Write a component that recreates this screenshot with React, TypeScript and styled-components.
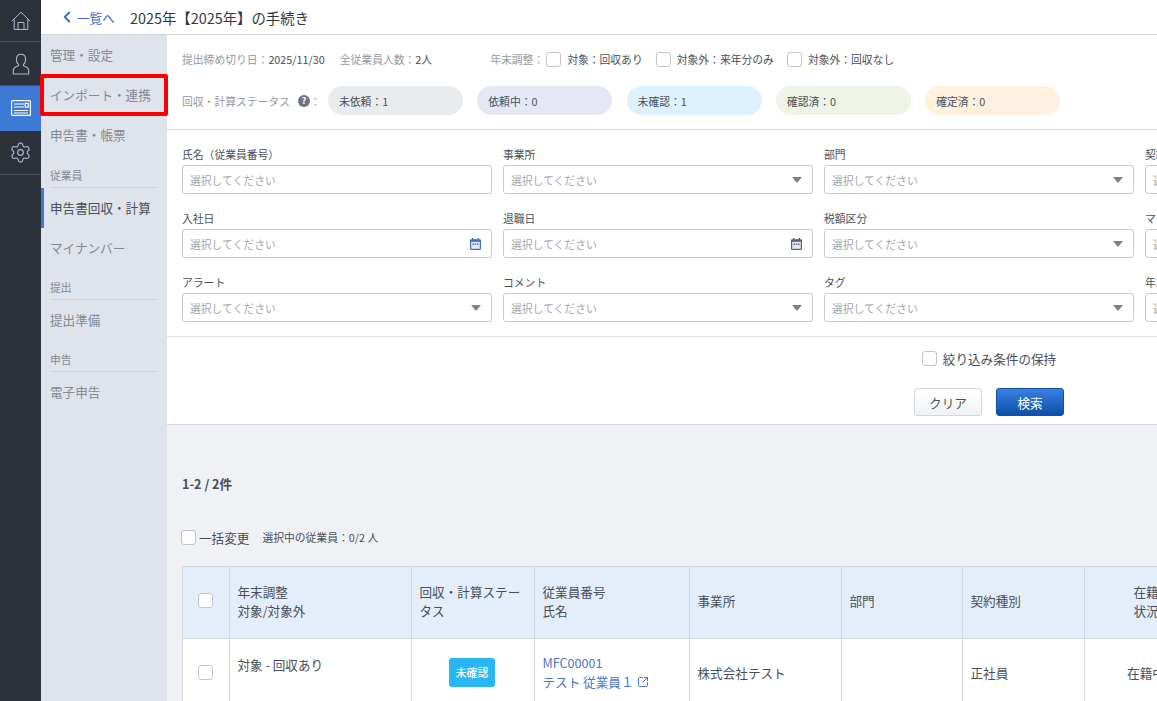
import React from 'react';
import styled, { createGlobalStyle } from 'styled-components';
import { Settings, SquareArrowOutUpRight, ChevronLeft } from 'lucide-react';

const GlobalStyle = createGlobalStyle`
  html, body {
    margin: 0;
    height: 100%;
    overflow: hidden;
    background: #fff;
    font-family: "Noto Sans CJK JP", "Noto Sans", sans-serif;
    color: #4a4f57;
  }
  * { box-sizing: border-box; }
`;

const Page = styled.div`
  display: flex;
  width: 1157px;
  height: 701px;
  overflow: hidden;
`;

const Rail = styled.nav`
  flex: 0 0 41px;
  background: #2d313a;
  display: flex;
  flex-direction: column;
`;

const RailItem = styled.div<{ $active?: boolean; $height: number }>`
  height: ${(p) => p.$height}px;
  display: flex;
  align-items: center;
  justify-content: center;
  color: ${(p) => (p.$active ? '#fff' : '#b0b8d0')};
  background: ${(p) => (p.$active ? '#3d7ad6' : 'transparent')};
  border-bottom: 1px solid ${(p) => (p.$active ? '#3d7ad6' : '#4a4f5c')};
`;

const Body = styled.div`
  flex: 1;
  min-width: 0;
  display: flex;
  flex-direction: column;
`;

const Header = styled.header`
  flex: 0 0 35px;
  display: flex;
  align-items: center;
  padding-left: 17px;
  background: #fff;
  border-bottom: 1px solid #d5d8e0;
`;

const BackLink = styled.a`
  display: flex;
  align-items: center;
  gap: 1px;
  width: 72px;
  font-size: 12.6px;
  color: #3b6fc4;
`;

const Title = styled.h1`
  margin: 0;
  font-size: 14.4px;
  font-weight: 400;
  color: #33373e;
`;

const Columns = styled.div`
  flex: 1;
  min-height: 0;
  display: flex;
`;

const SubNav = styled.aside`
  flex: 0 0 126px;
  background: #dfe3ec;
  position: relative;
  z-index: 1;
`;

const NavItem = styled.div<{ $active?: boolean; $height?: number; $marked?: boolean }>`
  position: relative;
  height: ${(p) => p.$height ?? 40}px;
  display: flex;
  align-items: center;
  padding-left: ${(p) => (p.$active ? 6 : 9)}px;
  padding-bottom: 2px;
  font-size: 12.6px;
  color: ${(p) => (p.$active ? '#4a4f57' : '#858994')};
  border-left: ${(p) => (p.$active ? '3px solid #3d7ad6' : 'none')};

  ${(p) =>
    p.$marked &&
    `&::after {
      content: '';
      position: absolute;
      inset: -1px -1px -1px -1px;
      border: 4px solid #fa0000;
      border-radius: 2px;
    }`}
`;

const NavHeading = styled.div`
  height: 32px;
  margin: 0 9px;
  padding-top: 11px;
  font-size: 10.8px;
  line-height: 16px;
  color: #858994;
  border-bottom: 1px solid #d0d3d9;
`;

const Main = styled.main`
  flex: 1;
  min-width: 0;
  overflow: hidden;
  background: #eff1f5;
`;

const Inner = styled.div`
  width: 1644px;
`;

const Summary = styled.section`
  height: 95px;
  padding: 14px 15px 0;
  background: #fff;
  border-bottom: 1px solid #d5d8de;
`;

const SummaryRow = styled.div`
  display: flex;
  align-items: center;
  height: 20px;
  font-size: 10.8px;
`;

const Fact = styled.span`
  margin-right: 15px;
  color: #4a4f57;
`;

const Muted = styled.span`
  color: #9599a3;
`;

const CheckGroup = styled.div`
  display: flex;
  align-items: center;
  gap: 13px;
  margin-left: 43px;
`;

const GroupTitle = styled(Muted)`
  margin-right: -11px;
`;

const Box = styled.span<{ $size?: number }>`
  flex: none;
  display: inline-block;
  width: ${(p) => p.$size ?? 15}px;
  height: ${(p) => p.$size ?? 15}px;
  background: #fff;
  border: 1px solid #c2c5cd;
  border-radius: 3px;
`;

const CellBox = styled(Box)`
  display: block;
  margin: 0 auto;
`;

const CheckLabel = styled.label<{ $gap?: number }>`
  display: inline-flex;
  align-items: center;
  gap: ${(p) => p.$gap ?? 6}px;
  color: #4a4f57;
`;

const StatusRow = styled.div`
  display: flex;
  align-items: center;
  margin-top: 17px;
  font-size: 10.8px;
`;

const StatusLabel = styled.div`
  display: flex;
  align-items: center;
  width: 146px;
  gap: 7px;
  color: #9599a3;
`;

const HelpColon = styled.span`
  margin-left: -8px;
`;

const Pills = styled.div`
  display: flex;
  gap: 14.3px;
`;

const Pill = styled.div<{ $bg: string }>`
  width: 135px;
  height: 29px;
  display: flex;
  align-items: center;
  padding-left: 11px;
  border-radius: 15px;
  background: ${(p) => p.$bg};
  color: #4a4f57;
`;

const Filters = styled.section`
  display: grid;
  grid-template-columns: repeat(5, 310px);
  column-gap: 11px;
  row-gap: 16px;
  padding: 16px 15px 14px;
  background: #fff;
  border-bottom: 1px solid #e2e4e9;
`;

const Field = styled.div`
  display: flex;
  flex-direction: column;
  gap: 3px;
`;

const FieldLabel = styled.div`
  height: 16px;
  font-size: 10.8px;
  line-height: 16px;
  color: #4a4f57;
`;

const Input = styled.div`
  height: 29px;
  display: flex;
  align-items: center;
  justify-content: space-between;
  padding: 0 10px 0 7px;
  font-size: 10.8px;
  color: #a3a6ac;
  background: #fff;
  border: 1px solid #c8cad0;
  border-radius: 3px;
`;

const Caret = styled.span`
  width: 0;
  height: 0;
  border-left: 5px solid transparent;
  border-right: 5px solid transparent;
  border-top: 6px solid #7b7f8b;
`;

const Actions = styled.section`
  height: 88px;
  display: flex;
  flex-direction: column;
  align-items: center;
  padding-top: 12px;
  gap: 21px;
  background: #fff;
  border-bottom: 1px solid #d5d8de;
`;

const KeepLabel = styled(CheckLabel)`
  font-size: 12.6px;
  height: 18px;
`;

const ButtonRow = styled.div`
  display: flex;
  gap: 14px;
`;

const Button = styled.button<{ $primary?: boolean }>`
  width: 68px;
  height: 28px;
  padding: 0;
  font: inherit;
  font-size: 12.6px;
  border-radius: 3px;
  color: ${(p) => (p.$primary ? '#fff' : '#4a4f57')};
  border: 1px solid ${(p) => (p.$primary ? '#0b52ac' : '#d3d6dc')};
  background: ${(p) =>
    p.$primary
      ? 'linear-gradient(#3b7fe2, #0a50a8)'
      : 'linear-gradient(#fff, #f1f2f5)'};
`;

const ListArea = styled.section`
  padding: 49px 15px 0;
`;

const Count = styled.div`
  height: 20px;
  font-size: 12.6px;
  line-height: 20px;
  font-weight: 700;
  color: #4a4f57;
`;

const BulkRow = styled.div`
  display: flex;
  align-items: center;
  height: 18px;
  margin: 34px 0 20px -1px;
`;

const BulkLabel = styled(CheckLabel)`
  font-size: 12.6px;
  gap: 3px;
  margin-right: 13px;
`;

const Selected = styled.span`
  font-size: 10.8px;
  color: #4a4f57;
`;

const Table = styled.table`
  table-layout: fixed;
  width: 1027px;
  border-collapse: collapse;
  background: #fff;
  font-size: 12.6px;
  line-height: 19px;
  color: #4a4f57;
`;

const HeadCell = styled.th<{ $width: number; $center?: boolean }>`
  width: ${(p) => p.$width}px;
  height: 72px;
  padding: ${(p) => (p.$center ? '0 9.5px 4px 7.5px' : '0 7.5px 4px')};
  font-weight: 400;
  text-align: ${(p) => (p.$center ? 'center' : 'left')};
  background: #e4eefb;
  border: 1px solid #d3d7de;
`;

const Cell = styled.td<{ $center?: boolean; $top?: boolean }>`
  height: 69px;
  padding: ${(p) => {
    if (p.$top) return '16px 7.5px 0';
    return p.$center ? '0 9.5px 2px 7.5px' : '0 7.5px 2px';
  }};
  vertical-align: ${(p) => (p.$top ? 'top' : 'middle')};
  text-align: ${(p) => (p.$center ? 'center' : 'left')};
  border: 1px solid #d3d7de;
`;

const StatusBadge = styled.span`
  display: inline-flex;
  align-items: center;
  justify-content: center;
  width: 46px;
  height: 29px;
  border-radius: 3px;
  font-size: 10.8px;
  font-weight: 500;
  color: #fff;
  background: #29b6f6;
`;

const EmployeeLink = styled.a`
  display: flex;
  align-items: center;
  gap: 4px;
  color: #4a76c9;
  font-size: 12.6px;
`;

const HomeIcon = () => (
  <svg width="20" height="20" viewBox="0 0 20 20" fill="none" stroke="currentColor" strokeWidth="1" strokeLinejoin="round">
    <path d="M0.8 10.2 10 1.2l9.2 9M3.2 8.2v10.3h13.6V8.2" />
    <path d="M7 18.5v-7h6v7" />
  </svg>
);

const UserIcon = () => (
  <svg width="18" height="22" viewBox="0 0 18 22" fill="none" stroke="currentColor" strokeWidth="1.1" strokeLinejoin="round">
    <path d="M9 1.2c-3 0-4.600 2.300-4.600 5.200 0 2.200.9 4.200 2.200 5.200v1.200c-2.800.9-5.300 2.500-5.300 4.600v3.600h15.400v-3.600c0-2.100-2.500-3.700-5.300-4.600v-1.200c1.300-1 2.200-3 2.200-5.200C13.600 3.500 12 1.200 9 1.200z" />
  </svg>
);

const FormIcon = () => (
  <svg width="20" height="16" viewBox="0 0 20 16" fill="none" stroke="currentColor" strokeWidth="1.2">
    <rect x="0.6" y="0.6" width="18.8" height="14.8" rx="1" />
    <path d="M3 4h10M3 7h10M3 10.500h14M3 13h14" />
    <rect x="14.200" y="3.400" width="3" height="3.800" />
  </svg>
);

const CalendarIcon = ({ color }: { color: string }) => (
  <svg width="11" height="12" viewBox="0 0 11 12">
    <path fill={color} d="M2 0h1.400v1.200h4.200V0H9v1.200h.8c.7 0 1.200.5 1.200 1.200v8.400c0 .7-.5 1.200-1.200 1.200H1.200C.5 12 0 11.500 0 10.800V2.400c0-.7.5-1.200 1.200-1.200H2z" />
    <rect x="1.200" y="3.800" width="8.600" height="7" fill="#e4e8f4" />
    <path fill={color} d="M2.500 5.600h1.400V7H2.500zM4.800 5.600h1.400V7H4.800zM7.100 5.600h1.400V7H7.100z" />
  </svg>
);

const HelpIcon = () => (
  <svg width="14" height="14" viewBox="0 0 14 14">
    <circle cx="7" cy="7" r="6" fill="#6f7382" />
    <text x="7" y="10.300" fontSize="9.500" fontWeight="700" textAnchor="middle" fill="#fff">?</text>
  </svg>
);

const placeholder = '選択してください';

type FieldDef = { label: string; icon?: 'caret' | 'calBlue' | 'calGrey' | 'none' };

const fields: FieldDef[] = [
  { label: '氏名（従業員番号）', icon: 'none' },
  { label: '事業所' },
  { label: '部門' },
  { label: '契約種別' },
  { label: '在籍状況' },
  { label: '入社日', icon: 'calBlue' },
  { label: '退職日', icon: 'calGrey' },
  { label: '税額区分' },
  { label: 'マイナンバー' },
  { label: '回収状況' },
  { label: 'アラート' },
  { label: 'コメント' },
  { label: 'タグ' },
  { label: '年末調整' },
];

const pills = [
  { text: '未依頼：1', bg: '#e9ecef' },
  { text: '依頼中：0', bg: '#e6e7f5' },
  { text: '未確認：1', bg: '#def2fe' },
  { text: '確認済：0', bg: '#eef4e6' },
  { text: '確定済：0', bg: '#fff1de' },
];

const FieldIcon = ({ icon }: { icon?: FieldDef['icon'] }) => {
  if (icon === 'none') return null;
  if (icon === 'calBlue') return <CalendarIcon color="#3d6fc8" />;
  if (icon === 'calGrey') return <CalendarIcon color="#5c606c" />;
  return <Caret />;
};

export default function App() {
  return (
    <Page>
      <GlobalStyle />
      <Rail>
        <RailItem $height={42}><HomeIcon /></RailItem>
        <RailItem $height={44}><UserIcon /></RailItem>
        <RailItem $height={45} $active><FormIcon /></RailItem>
        <RailItem $height={44}><Settings size={23} strokeWidth={1.2} /></RailItem>
      </Rail>
      <Body>
        <Header>
          <BackLink>
            <ChevronLeft size={18} strokeWidth={2.6} />
            一覧へ
          </BackLink>
          <Title>2025年【2025年】の手続き</Title>
        </Header>
        <Columns>
          <SubNav>
            <NavItem>管理・設定</NavItem>
            <NavItem $marked>インポート・連携</NavItem>
            <NavItem $height={41}>申告書・帳票</NavItem>
            <NavHeading>従業員</NavHeading>
            <NavItem $active>申告書回収・計算</NavItem>
            <NavItem>マイナンバー</NavItem>
            <NavHeading>提出</NavHeading>
            <NavItem>提出準備</NavItem>
            <NavHeading>申告</NavHeading>
            <NavItem>電子申告</NavItem>
          </SubNav>
          <Main>
            <Inner>
              <Summary>
                <SummaryRow>
                  <Fact><Muted>提出締め切り日：</Muted>2025/11/30</Fact>
                  <Fact><Muted>全従業員人数：</Muted>2人</Fact>
                  <CheckGroup>
                    <GroupTitle>年末調整：</GroupTitle>
                    <CheckLabel><Box />対象：回収あり</CheckLabel>
                    <CheckLabel><Box />対象外：来年分のみ</CheckLabel>
                    <CheckLabel><Box />対象外：回収なし</CheckLabel>
                  </CheckGroup>
                </SummaryRow>
                <StatusRow>
                  <StatusLabel>
                    回収・計算ステータス
                    <HelpIcon />
                    <HelpColon>：</HelpColon>
                  </StatusLabel>
                  <Pills>
                    {pills.map((pill) => (
                      <Pill key={pill.text} $bg={pill.bg}>{pill.text}</Pill>
                    ))}
                  </Pills>
                </StatusRow>
              </Summary>
              <Filters>
                {fields.map((field) => (
                  <Field key={field.label}>
                    <FieldLabel>{field.label}</FieldLabel>
                    <Input>
                      {placeholder}
                      <FieldIcon icon={field.icon} />
                    </Input>
                  </Field>
                ))}
              </Filters>
              <Actions>
                <KeepLabel><Box />絞り込み条件の保持</KeepLabel>
                <ButtonRow>
                  <Button>クリア</Button>
                  <Button $primary>検索</Button>
                </ButtonRow>
              </Actions>
              <ListArea>
                <Count>1-2 / 2件</Count>
                <BulkRow>
                  <BulkLabel><Box />一括変更</BulkLabel>
                  <Selected>選択中の従業員：0/2 人</Selected>
                </BulkRow>
                <Table>
                  <thead>
                    <tr>
                      <HeadCell $width={47} $center><CellBox /></HeadCell>
                      <HeadCell $width={182}>年末調整<br />対象/対象外</HeadCell>
                      <HeadCell $width={123}>回収・計算ステータス</HeadCell>
                      <HeadCell $width={155}>従業員番号<br />氏名</HeadCell>
                      <HeadCell $width={152}>事業所</HeadCell>
                      <HeadCell $width={121}>部門</HeadCell>
                      <HeadCell $width={122}>契約種別</HeadCell>
                      <HeadCell $width={125} $center>在籍<br />状況</HeadCell>
                    </tr>
                  </thead>
                  <tbody>
                    <tr>
                      <Cell $center><CellBox /></Cell>
                      <Cell $top>対象 - 回収あり</Cell>
                      <Cell $center><StatusBadge>未確認</StatusBadge></Cell>
                      <Cell>
                        <EmployeeLink>MFC00001</EmployeeLink>
                        <EmployeeLink>
                          テスト 従業員１
                          <SquareArrowOutUpRight size={12} />
                        </EmployeeLink>
                      </Cell>
                      <Cell>株式会社テスト</Cell>
                      <Cell />
                      <Cell>正社員</Cell>
                      <Cell $center>在籍中</Cell>
                    </tr>
                  </tbody>
                </Table>
              </ListArea>
            </Inner>
          </Main>
        </Columns>
      </Body>
    </Page>
  );
}
